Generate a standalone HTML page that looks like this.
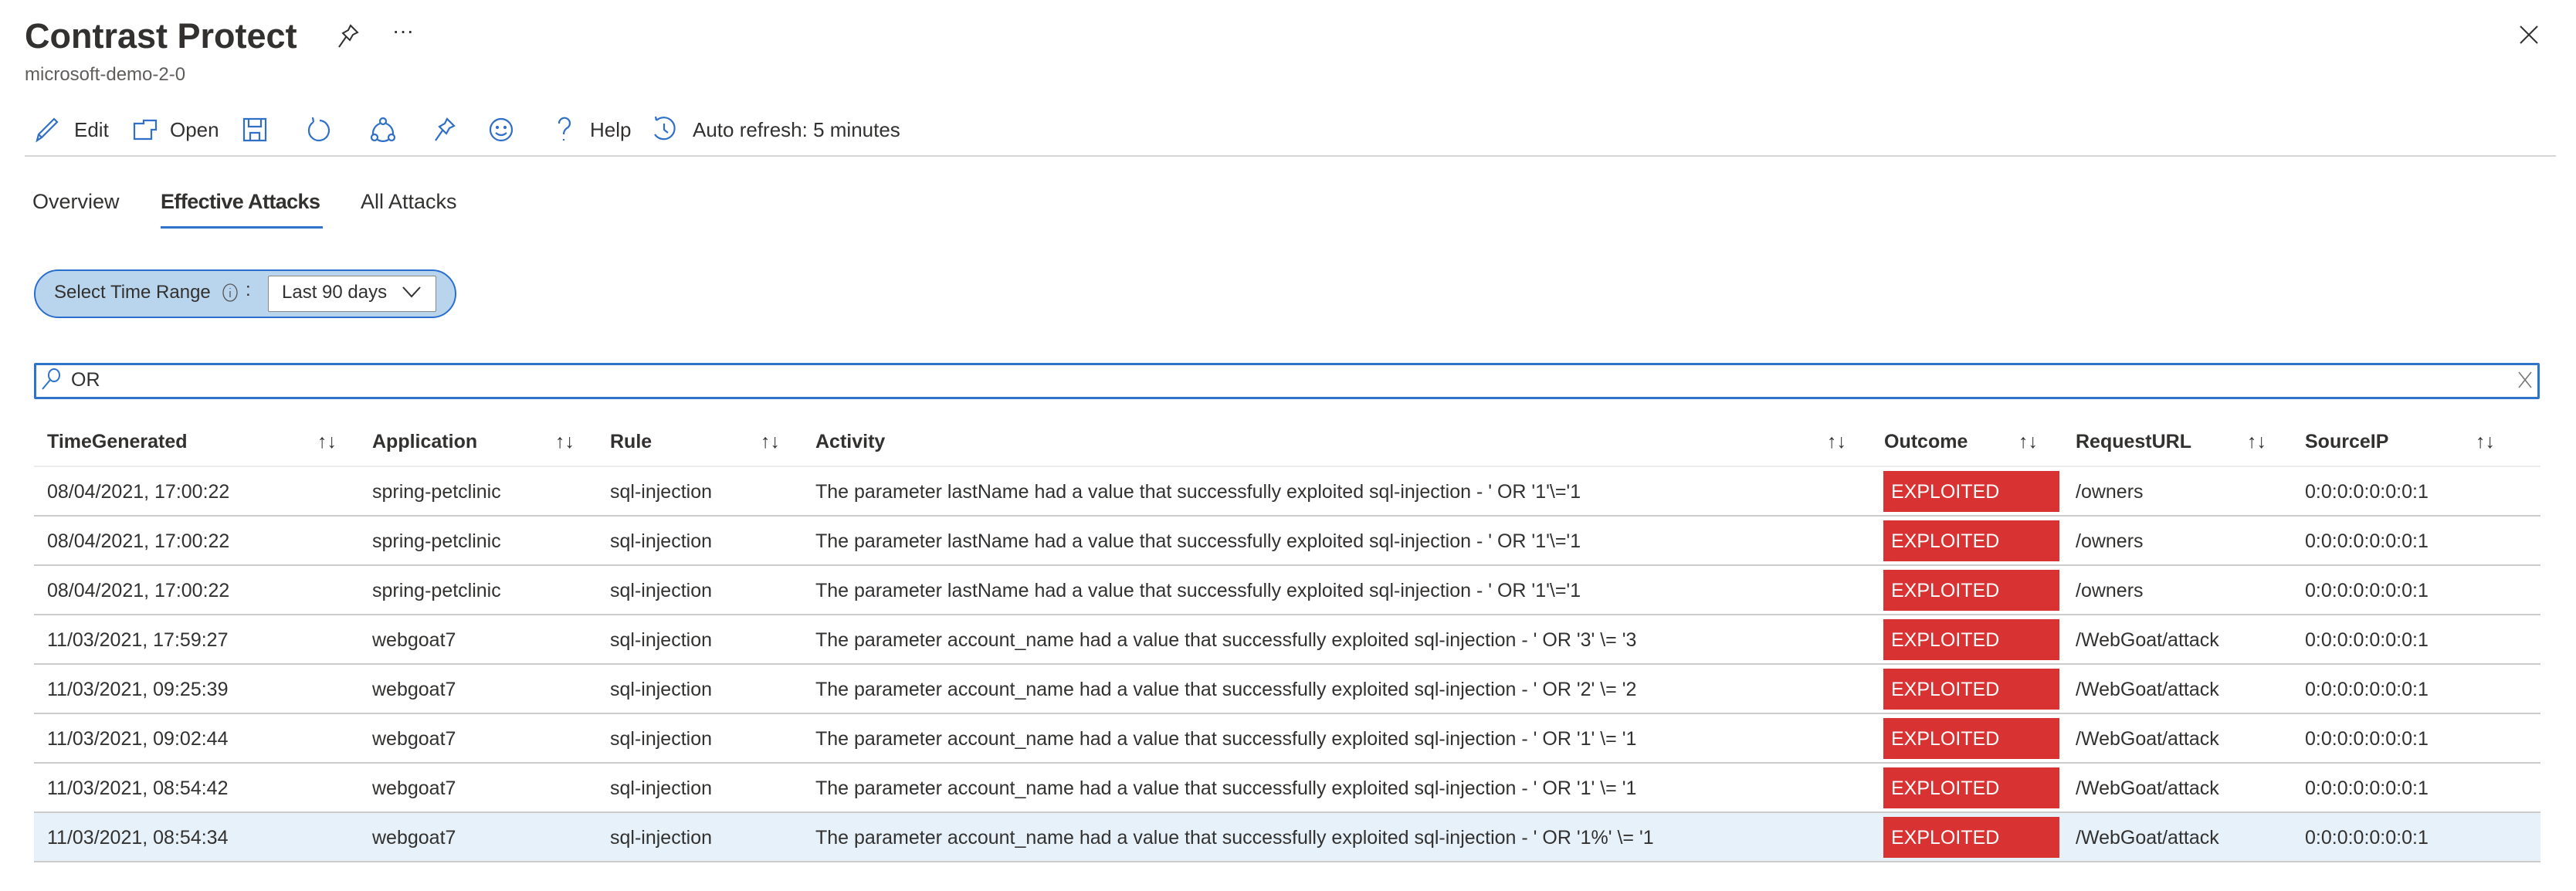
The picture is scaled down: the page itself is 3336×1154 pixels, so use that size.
<!DOCTYPE html>
<html><head><meta charset="utf-8"><style>
body{margin:0;width:3336px;height:1154px;background:#fff;font-family:"Liberation Sans",sans-serif;color:#323130;position:relative;overflow:hidden}
.a{position:absolute;white-space:nowrap}
.tb{font-size:26px;top:152px;line-height:32px}
.ic{position:absolute}
.hd{font-size:25px;font-weight:bold;top:556px;line-height:32px}
.ar{font-size:25px;top:556px;line-height:32px;color:#323130}
.row{position:absolute;left:44px;width:3246px;height:62px;border-bottom:2px solid #cccccc}
.row span{position:absolute;top:17px;font-size:25px;line-height:30px;white-space:nowrap}
.bd{position:absolute;left:2395px;top:5px;width:228px;height:53px;background:#d83232;color:#fff}
.bd b{font-weight:normal;position:absolute;left:10px;top:12px;font-size:25px;line-height:30px}
</style></head><body>
<div class="a" style="left:32px;top:19px;font-size:45px;font-weight:bold;line-height:56px">Contrast Protect</div>
<svg class="ic" style="left:436px;top:30px" width="30" height="34" viewBox="0 0 30 34" fill="none" stroke="#323130" stroke-width="2"><path d="M18 3 L27 12 L21 15 L17 22 L8 13 L15 9 Z M12 18 L3 31"/></svg>
<div class="a" style="left:508px;top:24px;font-size:28px">···</div>
<div class="a" style="left:32px;top:82px;font-size:24px;color:#605e5c;line-height:30px">microsoft-demo-2-0</div>
<svg class="ic" style="left:3262px;top:32px" width="26" height="26" viewBox="0 0 26 26" stroke="#323130" stroke-width="2"><path d="M2 2L24 24M24 2L2 24"/></svg>

<svg class="ic" style="left:44px;top:150px" width="1000" height="36" viewBox="0 0 1000 36" fill="none" stroke="#2f6fc8" stroke-width="2.2">
<path d="M4 32 L6 24 L26 4 L30 8 L10 28 Z M6 24 L10 28"/>
<path d="M130 10 H142 V6 H158 V18 H152 V30 H130 Z M142 10 V6" />
<path d="M272 4 H300 V32 H272 Z M278 4 V14 H294 V4 M280 32 V22 H292 V32"/>
<path d="M362 8 A13 13 0 1 0 370 6 M362 8 L361 2"/>
<circle cx="452" cy="7" r="4"/><circle cx="441" cy="28" r="4"/><circle cx="463" cy="28" r="4"/><path d="M448 10 A14 14 0 0 0 439 24 M456 10 A14 14 0 0 1 465 24 M445 31 A14 14 0 0 0 459 31"/>
<path d="M535 4 L544 13 L538 16 L534 23 L525 14 L532 10 Z M529 19 L520 32"/>
<circle cx="605" cy="18" r="14"/><circle cx="600" cy="15" r="1"/><circle cx="610" cy="15" r="1"/><path d="M598 22 Q605 28 612 22"/>
<path d="M680 10 A7 7 0 1 1 690 16 Q686 19 686 24 M686 30 V32"/>
<path d="M806 6 A14 14 0 1 1 804 24 M806 6 L805 1 M816 10 V18 L821 22"/>
</svg>
<div class="a tb" style="left:96px">Edit</div>
<div class="a tb" style="left:220px">Open</div>
<div class="a tb" style="left:764px">Help</div>
<div class="a tb" style="left:897px">Auto refresh: 5 minutes</div>
<div class="a" style="left:32px;top:201px;width:3278px;height:2px;background:#d6d6d6"></div>

<div class="a" style="left:42px;top:244px;font-size:27px;line-height:34px">Overview</div>
<div class="a" style="left:208px;top:244px;font-size:27px;line-height:34px;font-weight:bold;letter-spacing:-0.6px">Effective Attacks</div>
<div class="a" style="left:467px;top:244px;font-size:27px;line-height:34px">All Attacks</div>
<div class="a" style="left:208px;top:293px;width:210px;height:3px;background:#2f74c8"></div>

<div class="a" style="left:44px;top:349px;width:543px;height:59px;border:2px solid #2b6fce;border-radius:32px;background:#b9d5ee"></div>
<div class="a" style="left:70px;top:364px;font-size:24px;line-height:30px">Select Time Range</div>
<svg class="ic" style="left:287px;top:366px" width="22" height="26" viewBox="0 0 22 26" fill="none" stroke="#555" stroke-width="1.3"><ellipse cx="11" cy="13" rx="9" ry="11"/><path d="M11 11V19M11 7V8"/></svg>
<div class="a" style="left:318px;top:362px;font-size:24px">:</div>
<div class="a" style="left:347px;top:357px;width:216px;height:45px;background:#fff;border:1px solid #8a8886;border-radius:2px"></div>
<div class="a" style="left:365px;top:364px;font-size:24px;line-height:30px">Last 90 days</div>
<svg class="ic" style="left:520px;top:368px" width="26" height="20" viewBox="0 0 26 20" fill="none" stroke="#323130" stroke-width="2"><path d="M2 4L13 16L24 4"/></svg>

<div class="a" style="left:44px;top:470px;width:3239px;height:41px;border:3px solid #2f74c8;border-radius:2px"></div>
<svg class="ic" style="left:52px;top:476px" width="28" height="30" viewBox="0 0 28 30" fill="none" stroke="#2f74c8" stroke-width="2"><ellipse cx="18" cy="10" rx="7" ry="8"/><path d="M13 16L3 28"/></svg>
<div class="a" style="left:92px;top:477px;font-size:25px;line-height:30px">OR</div>
<svg class="ic" style="left:3260px;top:480px" width="20" height="24" viewBox="0 0 20 24" stroke="#777" stroke-width="1.6"><path d="M2 2L18 22M18 2L2 22"/></svg>

<div class="a hd" style="left:61px">TimeGenerated</div><div class="a ar" style="left:411px">↑↓</div>
<div class="a hd" style="left:482px">Application</div><div class="a ar" style="left:719px">↑↓</div>
<div class="a hd" style="left:790px">Rule</div><div class="a ar" style="left:985px">↑↓</div>
<div class="a hd" style="left:1056px">Activity</div><div class="a ar" style="left:2366px">↑↓</div>
<div class="a hd" style="left:2440px">Outcome</div><div class="a ar" style="left:2614px">↑↓</div>
<div class="a hd" style="left:2688px">RequestURL</div><div class="a ar" style="left:2910px">↑↓</div>
<div class="a hd" style="left:2985px">SourceIP</div><div class="a ar" style="left:3206px">↑↓</div>
<div class="a" style="left:44px;top:603px;width:3246px;height:2px;background:#ebebeb"></div>

<div class="row" style="top:605px"><span style="left:17px">08/04/2021, 17:00:22</span><span style="left:438px">spring-petclinic</span><span style="left:746px">sql-injection</span><span style="left:1012px">The parameter lastName had a value that successfully exploited sql-injection - ' OR '1'\='1</span><div class="bd"><b>EXPLOITED</b></div><span style="left:2644px">/owners</span><span style="left:2941px">0:0:0:0:0:0:0:1</span></div>
<div class="row" style="top:669px"><span style="left:17px">08/04/2021, 17:00:22</span><span style="left:438px">spring-petclinic</span><span style="left:746px">sql-injection</span><span style="left:1012px">The parameter lastName had a value that successfully exploited sql-injection - ' OR '1'\='1</span><div class="bd"><b>EXPLOITED</b></div><span style="left:2644px">/owners</span><span style="left:2941px">0:0:0:0:0:0:0:1</span></div>
<div class="row" style="top:733px"><span style="left:17px">08/04/2021, 17:00:22</span><span style="left:438px">spring-petclinic</span><span style="left:746px">sql-injection</span><span style="left:1012px">The parameter lastName had a value that successfully exploited sql-injection - ' OR '1'\='1</span><div class="bd"><b>EXPLOITED</b></div><span style="left:2644px">/owners</span><span style="left:2941px">0:0:0:0:0:0:0:1</span></div>
<div class="row" style="top:797px"><span style="left:17px">11/03/2021, 17:59:27</span><span style="left:438px">webgoat7</span><span style="left:746px">sql-injection</span><span style="left:1012px">The parameter account_name had a value that successfully exploited sql-injection - ' OR '3' \= '3</span><div class="bd"><b>EXPLOITED</b></div><span style="left:2644px">/WebGoat/attack</span><span style="left:2941px">0:0:0:0:0:0:0:1</span></div>
<div class="row" style="top:861px"><span style="left:17px">11/03/2021, 09:25:39</span><span style="left:438px">webgoat7</span><span style="left:746px">sql-injection</span><span style="left:1012px">The parameter account_name had a value that successfully exploited sql-injection - ' OR '2' \= '2</span><div class="bd"><b>EXPLOITED</b></div><span style="left:2644px">/WebGoat/attack</span><span style="left:2941px">0:0:0:0:0:0:0:1</span></div>
<div class="row" style="top:925px"><span style="left:17px">11/03/2021, 09:02:44</span><span style="left:438px">webgoat7</span><span style="left:746px">sql-injection</span><span style="left:1012px">The parameter account_name had a value that successfully exploited sql-injection - ' OR '1' \= '1</span><div class="bd"><b>EXPLOITED</b></div><span style="left:2644px">/WebGoat/attack</span><span style="left:2941px">0:0:0:0:0:0:0:1</span></div>
<div class="row" style="top:989px"><span style="left:17px">11/03/2021, 08:54:42</span><span style="left:438px">webgoat7</span><span style="left:746px">sql-injection</span><span style="left:1012px">The parameter account_name had a value that successfully exploited sql-injection - ' OR '1' \= '1</span><div class="bd"><b>EXPLOITED</b></div><span style="left:2644px">/WebGoat/attack</span><span style="left:2941px">0:0:0:0:0:0:0:1</span></div>
<div class="row" style="top:1053px;background:#e6f1fa"><span style="left:17px">11/03/2021, 08:54:34</span><span style="left:438px">webgoat7</span><span style="left:746px">sql-injection</span><span style="left:1012px">The parameter account_name had a value that successfully exploited sql-injection - ' OR '1%' \= '1</span><div class="bd"><b>EXPLOITED</b></div><span style="left:2644px">/WebGoat/attack</span><span style="left:2941px">0:0:0:0:0:0:0:1</span></div>
</body></html>
